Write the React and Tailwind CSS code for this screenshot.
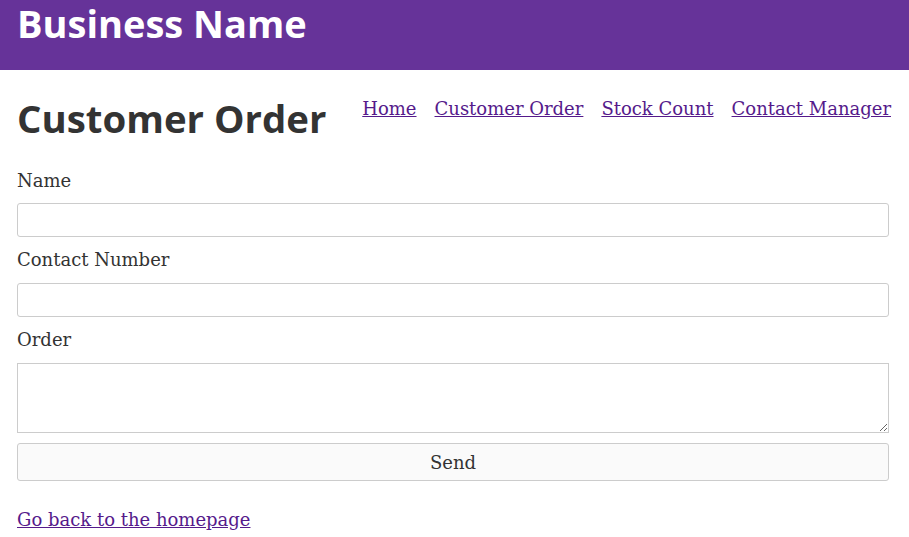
export default function App() {
  const serif = { fontFamily: '"DejaVu Serif", serif' };
  return (
    <div className="min-h-[537px] bg-white text-[#333]" style={serif}>
      <header className="h-[70px] bg-[#663399] px-[17px]">
        <h1 className="text-[38px] font-bold leading-[46px] text-white" style={{ fontFamily: '"Open Sans", sans-serif' }}>
          Business Name
        </h1>
      </header>
      <main className="pl-[17px] pr-[18px]">
        <div className="flex items-start justify-between pt-[24px]">
          <h2 className="text-[38.4px] font-bold leading-[48px] text-[#333]" style={{ fontFamily: '"Open Sans", sans-serif' }}>
            Customer Order
          </h2>
          <nav className="flex gap-[18px] pt-[3px] text-[18px] leading-[24px]">
            <a href="#" className="text-[#551a8b] underline">Home</a>
            <a href="#" className="text-[#551a8b] underline">Customer Order</a>
            <a href="#" className="text-[#551a8b] underline">Stock Count</a>
            <a href="#" className="text-[#551a8b] underline">Contact Manager</a>
          </nav>
        </div>
        <form className="mt-[26px] flex flex-col text-[18px]">
          <label className="mb-[9px] block leading-[26px]">Name</label>
          <input className="mb-[10px] h-[34px] w-[872px] rounded-[3px] border border-[#ccc] px-2" />
          <label className="mb-[10px] block leading-[26px]">Contact Number</label>
          <input className="mb-[10px] h-[34px] w-[872px] rounded-[3px] border border-[#ccc] px-2" />
          <label className="mb-[10px] block leading-[26px]">Order</label>
          <textarea className="mb-[10px] h-[70px] w-[872px] rounded-none border border-[#ccc] px-2" />
          <button type="button" className="h-[38px] w-[872px] rounded-[3px] border border-[#ccc] bg-[#fafafa] text-[18px] text-[#333]">
            Send
          </button>
        </form>
        <p className="mt-[26px] text-[18px] leading-[26px]">
          <a href="#" className="text-[#551a8b] underline">Go back to the homepage</a>
        </p>
      </main>
    </div>
  );
}
